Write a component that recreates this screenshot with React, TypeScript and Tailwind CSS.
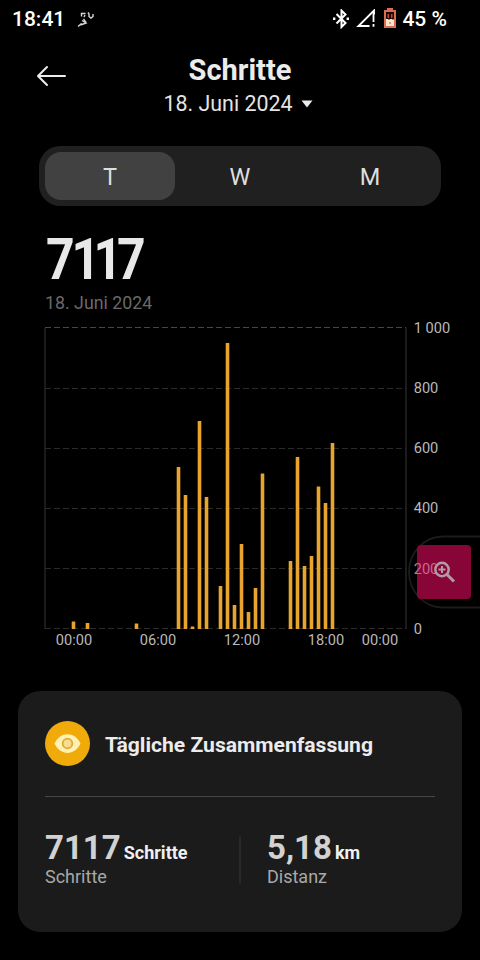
const FONT = "font-['Roboto','Noto_Sans',sans-serif]";

const BASELINE = 629;

// Half-hour bars: centre x and top y inside the chart's coordinate system
const bars: [number, number][] = [
  [73.5, 621.5], [87.5, 623], [136.5, 623.5],
  [178.5, 467], [185.5, 495], [192.5, 626.5], [199.5, 421], [206.5, 497],
  [220.5, 586], [227.5, 343], [234.5, 605], [241.5, 544], [248.5, 612],
  [255.5, 588], [262.5, 473.5], [290.5, 561], [297.5, 457], [304.5, 566],
  [311.5, 556], [318.5, 486.5], [325.5, 503], [332.5, 443],
];

const yTicks: [string, number][] = [
  ["1 000", 328], ["800", 388.5], ["600", 448.5], ["400", 508.5], ["200", 569], ["0", 629],
];

const xTicks: [string, number][] = [
  ["00:00", 74], ["06:00", 158], ["12:00", 242], ["18:00", 326], ["00:00", 380],
];

function StatusBar() {
  return (
    <div className="flex h-[38px] items-center pl-[12px] text-[21px] leading-none font-medium text-white">
      <span className="w-[65px]">18:41</span>
      <svg width="18" height="17" viewBox="0 0 18 17" fill="none" stroke="#d8d8d8" strokeWidth="1.4">
        <path d="M1 15.500 4.500 12.500M5 9.500 9 12 3.500 14M6.500 8 9 11.500M4.500 5.500V2.500H8.500M8 4 7 6M11 1.500 12 3V5.500L14 7 16 5.500V3" />
      </svg>
      <div className="ml-auto flex items-center pr-[33px]">
        <svg width="18" height="20" viewBox="0 0 18 20" fill="none" stroke="white" strokeWidth="2">
          <path d="m5.500 5 9 9L10.500 18V1.500L14.500 5.500 5.500 14.500" />
          <path d="M2 9.700h2.400M15.600 9.700H18" strokeWidth="2.4" />
        </svg>
        <svg className="ml-[6px]" width="21" height="20" viewBox="0 0 21 20" fill="none" stroke="white" strokeWidth="1.9">
          <path d="M14.500 17H3.500L19 1.500v4" />
          <path d="M18.500 4v9M18.500 15v2.800" strokeWidth="1.800" />
        </svg>
        <svg className="ml-[7px]" width="14" height="22" viewBox="0 0 14 22">
          <path d="M4 0h6v2h3v18H1V2h3z" fill="#d86f52" />
          <path d="M3 4h8v7H3z" fill="#1d0502" />
          <path d="M3 11h2v1h2v-1h2v1h2v6H3z" fill="#fbe5cf" />
          <path d="M4.500 10V6h1.500v4zM8 10V6h1.500v4z" fill="#b84e38" />
          <path d="M6 14h2v2H6z" fill="#e09b79" />
        </svg>
        <span className="ml-[5px]">45 %</span>
      </div>
    </div>
  );
}

function Header() {
  return (
    <header className="grid h-[108px] grid-cols-[100px_1fr_100px] pt-[16px]">
      <svg className="mt-[10px] ml-[36px]" width="32" height="24" viewBox="0 0 32 24" fill="none" stroke="#ececec" strokeWidth="2" strokeLinecap="round" strokeLinejoin="round">
        <path d="M29 12H2M11 3 2 12l9 9" />
      </svg>
      <div className="flex flex-col items-center">
        <h1 className="text-[29px] leading-[33px] font-bold text-[#ececec]">Schritte</h1>
        <button className="-ml-[4px] flex items-center gap-[8px] text-[21.4px] leading-[34px] whitespace-nowrap text-[#e4e4e4]">
          18. Juni 2024
          <svg width="12" height="8" viewBox="0 0 12 8" fill="#ececec">
            <path d="M.5.500h11L6 7.500z" />
          </svg>
        </button>
      </div>
    </header>
  );
}

function Tabs() {
  return (
    <div className="mx-[39px] grid h-[60px] grid-cols-3 rounded-[21px] bg-[#202020] p-[6px] text-[23.500px] text-[#dedede]">
      <div className="flex items-center justify-center rounded-[16px] bg-[#414141] pt-[3px]">T</div>
      <div className="flex items-center justify-center pt-[3px]">W</div>
      <div className="flex items-center justify-center pt-[3px]">M</div>
    </div>
  );
}

function Chart() {
  return (
    <svg className={`block ${FONT}`} width="480" height="376" viewBox="0 315 480 376">
      <g stroke="#2a2a2a" strokeWidth="1" strokeDasharray="6 3">
        {yTicks.map(([label, y]) => (
          <path key={label} d={`M45 ${Math.floor(y - 0.5) + 0.5}H406`} stroke={y === 328 ? "#464646" : undefined} />
        ))}
      </g>
      <path d="M45 328V629M406 328V629" stroke="#272727" strokeWidth="1.400" />
      {bars.map(([x, top]) => (
        <rect key={x} x={x - 1.8} y={top} width="3.600" height={BASELINE - top} rx=".5" fill="#e8a42c" />
      ))}
      <g fill="#b9b9b9" fontSize="14.600">
        {xTicks.map(([label, x]) => (
          <text key={x} x={x} y="645" textAnchor="middle">{label}</text>
        ))}
        {yTicks.map(([label, y]) => (
          <text key={label} x="413.700" y={Math.floor(y) + 5} fill={label === "200" ? "#929292" : undefined}>{label}</text>
        ))}
      </g>
      <path d="M480 536.500H443a34 35.500 0 0 0 0 71H480" fill="none" stroke="#1b1b1b" strokeWidth="1.800" />
      <rect x="417" y="545" width="54" height="54" rx="4" fill="#870637" />
      <clipPath id="magnifier-label">
        <rect x="417" y="560" width="19" height="18" />
      </clipPath>
      <text x="413.700" y="574" fontSize="14.600" fill="#cb668d" clipPath="url(#magnifier-label)">200</text>
      <g fill="none" stroke="#b49aa7">
        <circle cx="442" cy="569.500" r="6.700" strokeWidth="2.500" />
        <path d="m447 574.500 7 7" strokeWidth="3" />
        <path d="M438.500 569.500h7M442 566v7" strokeWidth="2" />
      </g>
    </svg>
  );
}

function Metric({ value, unit, label }: { value: string; unit: string; label: string }) {
  return (
    <div className="flex flex-col">
      <div className="flex h-[34px] items-baseline gap-[3px] leading-[34px]">
        <span className="text-[33px] font-bold text-[#d2d2d2]">{value}</span>
        <span className="text-[18px] leading-[20px] font-bold text-[#f0f0f0]">{unit}</span>
      </div>
      <span className="text-[18px] leading-[24px] text-[#a8a8a8]">{label}</span>
    </div>
  );
}

function Summary() {
  return (
    <section className="mx-[18px] h-[241px] rounded-[22px] bg-[#1b1b1b] px-[27px] pt-[30px]">
      <div className="flex h-[45px] items-center gap-[15px]">
        <svg width="45" height="45" viewBox="0 0 45 45">
          <circle cx="22.500" cy="22.500" r="22.500" fill="#f0ab0b" />
          <path d="M9.500 22.500C15 10 30 10 35.500 22.500 30 35 15 35 9.500 22.500Z" fill="#fff0b3" />
          <circle cx="22.500" cy="22.500" r="4.800" fill="#f7dc91" stroke="#dfaa35" strokeWidth="1.800" />
        </svg>
        <h2 className="pt-[2px] text-[21.100px] leading-[32px] font-bold text-[#ececec]">Tägliche Zusammenfassung</h2>
      </div>
      <div className="mt-[30px] h-px bg-[#464646]" />
      <div className="mt-[34px] grid grid-cols-[194px_28px_1fr]">
        <Metric value="7117" unit="Schritte" label="Schritte" />
        <div className="mt-[5px] h-[48px] w-[2px] bg-[#292929]" />
        <Metric value="5,18" unit="km" label="Distanz" />
      </div>
    </section>
  );
}

export default function App() {
  return (
    <main className={`h-[960px] w-[480px] overflow-hidden bg-black ${FONT}`}>
      <StatusBar />
      <Header />
      <Tabs />
      <div className="h-[109px] pt-[20px] pl-[45px]">
        <div className="ml-px w-fit origin-left scale-x-[.86] text-[58px] leading-[66px] font-bold text-[#e8e8e8]">
          <span className="tracking-[-3.500px]">7</span>
          <span className="tracking-[-7.700px]">1</span>
          <span className="tracking-[-6.200px]">1</span>
          <span>7</span>
        </div>
        <div className="pt-px text-[17.800px] leading-[20px] text-[#696969]">18. Juni 2024</div>
      </div>
      <Chart />
      <Summary />
    </main>
  );
}
